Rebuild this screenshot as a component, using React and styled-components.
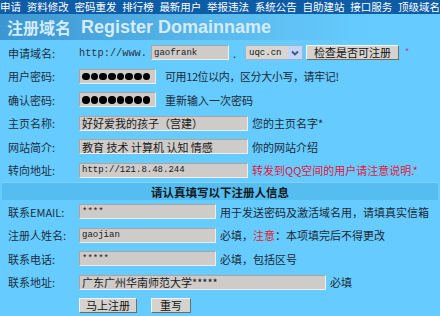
import React from 'react';
import styled, { createGlobalStyle } from 'styled-components';

const Global = createGlobalStyle`
  html, body { margin: 0; padding: 0; background: #66ccff; }
  body {
    font-family: "Noto Sans CJK SC", "Noto Sans", sans-serif;
    font-size: 11px;
    color: #1c2838;
    overflow: hidden;
  }
`;

const Page = styled.div`
  width: 440px; height: 316px; overflow: hidden; background: #66ccff;
`;

const Nav = styled.div`
  height: 14px; background: #0d5ca6;
  display: flex; justify-content: space-between; align-items: center;
  color: #fff; font-size: 10.5px; line-height: 14px; white-space: nowrap;
`;

const TitleBar = styled.div`
  height: 26px; display: flex; align-items: center; gap: 10px; padding-left: 7px;
  background: linear-gradient(to right, #3c96d2, #58b6ea 45%, #66ccff 85%);
  color: #d4ecf8; font-weight: 700;
`;

const TitleCn = styled.span`
  font-size: 16px; line-height: 20px;
`;

const TitleEn = styled.span`
  font-family: "Liberation Sans", Arial, sans-serif; font-size: 18px; line-height: 20px;
`;

const Form = styled.div`
  padding-top: 1px;
`;

const Row = styled.div`
  height: 23.5px; display: flex; align-items: center; gap: 4px; padding-left: 8px;
  white-space: nowrap;
`;

const Label = styled.span`
  width: 67px; flex: none; color: #1e2c40; font-size: 11px;
`;

const Prefix = styled.span`
  font-family: "Liberation Mono", monospace; font-size: 10.3px; color: #2a3344;
`;

const Field = styled.div`
  width: ${p => p.$w}px; height: 15px; flex: none; box-sizing: border-box;
  background: #cfcbc8;
  border: 1px solid; border-color: #a8a6a4 #eeeeee #eeeeee #a8a6a4;
  display: flex; align-items: center; gap: 1.2px; padding: 0 2px;
  overflow: hidden; color: #1a1a1a;
  font-family: ${p => p.$mono ? '"Liberation Mono", monospace' : 'inherit'};
  font-size: ${p => p.$mono ? '9px' : '11px'};
`;

const Bullet = styled.span`
  width: 7.5px; height: 7.5px; border-radius: 50%; background: #000; flex: none;
`;

const Sep = styled.span`
  padding: 0 5px 0 0; color: #223;
`;

const Select = styled.div`
  width: 58px; height: 15px; box-sizing: border-box; flex: none;
  border: 1px solid #9eb4cc; background: #d8d5d2;
  display: flex; align-items: center; justify-content: space-between;
  font-family: "Liberation Mono", monospace; font-size: 9px; color: #111;
  padding-left: 3px;
`;

const Arrow = styled.span`
  width: 14px; height: 13px; background: #c4d6f6; display: flex;
  align-items: center; justify-content: center;
`;

const Button = styled.button`
  height: 15px; padding: 0 ${p => p.$px || 6}px; margin: 0 0 0 ${p => p.$ml || 0}px;
  box-sizing: border-box; font-family: inherit; font-size: 11px; line-height: 13px; color: #111;
  background: #d6d3ce;
  border: 1px solid; border-color: #f4f4f4 #6e6e6e #6e6e6e #f4f4f4;
  cursor: pointer;
`;

const Star = styled.span`
  color: #b83c9c; font-size: 9px; align-self: flex-start; margin: 4px 0 0 2px;
`;

const Hint = styled.span`
  margin-left: ${p => p.$ml || 0}px;
  color: ${p => p.$red ? '#e2163e' : '#1c2838'};
  font-size: 11px;
  letter-spacing: ${p => p.$tight ? '-0.4px' : '0'};
`;

const Red = styled.span`
  color: #e01c2c;
`;

const Section = styled.div`
  height: 18px; margin: 0 2px; display: flex; align-items: center; justify-content: center;
  background: #56bdf0; border-top: 1px solid #7fd2fa; box-sizing: border-box;
  font-weight: 700; font-size: 11.5px; color: #101820;
`;

const Buttons = styled.div`
  display: flex; gap: 14px;
`;

const navItems = ['申请', '资料修改', '密码重发', '排行榜', '最新用户', '举报违法', '系统公告', '自助建站', '接口服务', '顶级域名'];

const Dots = ({ n }) => (
  <>{Array.from({ length: n }).map((_, i) => <Bullet key={i} />)}</>
);

export default function App() {
  return (
    <Page>
      <Global />
      <Nav>{navItems.map(t => <span key={t}>{t}</span>)}</Nav>
      <TitleBar>
        <TitleCn>注册域名</TitleCn>
        <TitleEn>Register Domainname</TitleEn>
      </TitleBar>
      <Form>
        <Row>
          <Label>申请域名:</Label>
          <Prefix>http://www.</Prefix>
          <Field $w={78} $mono>gaofrank</Field>
          <Sep>.</Sep>
          <Select>
            uqc.cn
            <Arrow>
              <svg width="8" height="6" viewBox="0 0 8 6">
                <path d="M1 1.5 L4 4.5 L7 1.5" fill="none" stroke="#3c5488" strokeWidth="1.8" />
              </svg>
            </Arrow>
          </Select>
          <Button $px={7} $ml={-1}>检查是否可注册</Button>
          <Star>*</Star>
        </Row>
        <Row>
          <Label>用户密码:</Label>
          <Field $w={77}><Dots n={8} /></Field>
          <Hint $ml={5} $tight>可用12位以内，区分大小写，请牢记!</Hint>
        </Row>
        <Row>
          <Label>确认密码:</Label>
          <Field $w={77}><Dots n={8} /></Field>
          <Hint $ml={5}>重新输入一次密码</Hint>
        </Row>
        <Row>
          <Label>主页名称:</Label>
          <Field $w={169}>好好爱我的孩子（宫建）</Field>
          <Hint>您的主页名字*</Hint>
        </Row>
        <Row>
          <Label>网站简介:</Label>
          <Field $w={169}>教育 技术 计算机 认知 情感</Field>
          <Hint>你的网站介绍</Hint>
        </Row>
        <Row>
          <Label>转向地址:</Label>
          <Field $w={169} $mono>http://121.8.48.244</Field>
          <Hint $red>转发到QQ空间的用户请注意说明.*</Hint>
        </Row>
        <Section>请认真填写以下注册人信息</Section>
        <Row>
          <Label>联系EMAIL:</Label>
          <Field $w={137} $mono>****</Field>
          <Hint>用于发送密码及激活域名用，请填真实信箱</Hint>
        </Row>
        <Row>
          <Label>注册人姓名:</Label>
          <Field $w={137} $mono>gaojian</Field>
          <Hint>必填，<Red>注意</Red>：本项填完后不得更改</Hint>
        </Row>
        <Row>
          <Label>联系电话:</Label>
          <Field $w={137} $mono>*****</Field>
          <Hint>必填，包括区号</Hint>
        </Row>
        <Row>
          <Label>联系地址:</Label>
          <Field $w={247}>广东广州华南师范大学*****</Field>
          <Hint>必填</Hint>
        </Row>
        <Row>
          <Label />
          <Buttons>
            <Button $px={6}>马上注册</Button>
            <Button $px={8}>重写</Button>
          </Buttons>
        </Row>
      </Form>
    </Page>
  );
}
